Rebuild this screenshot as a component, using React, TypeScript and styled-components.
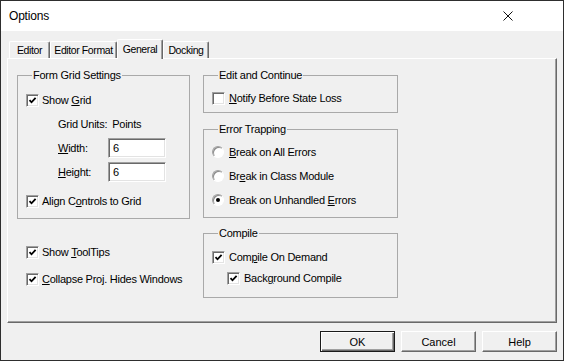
import React from "react";
import styled, { createGlobalStyle, css } from "styled-components";

const Global = createGlobalStyle`
  html, body { margin: 0; padding: 0; background: #ffffff; }
  * { box-sizing: border-box; }
`;

const Window = styled.div`
  width: 564px;
  height: 361px;
  border: 1px solid #2e2e2e;
  background: #f0f0f0;
  display: flex;
  flex-direction: column;
  font-family: "Liberation Sans", Arial, sans-serif;
  font-size: 11px;
  letter-spacing: -0.25px;
  color: #000;
  overflow: hidden;
`;

const TitleBar = styled.div`
  height: 30px;
  flex: none;
  background: #ffffff;
  display: flex;
  align-items: center;
  justify-content: space-between;
  padding: 0 50px 0 8px;
`;

const TitleText = styled.span`
  font-size: 12px;
  letter-spacing: -0.2px;
`;

const Body = styled.div`
  flex: 1;
  display: flex;
  flex-direction: column;
  padding: 8px 6px 0 6px;
`;

const TabStrip = styled.div`
  height: 19px;
  display: flex;
  align-items: flex-end;
  padding-left: 2px;
`;

const Tab = styled.div<{ $active?: boolean; $w: number }>`
  width: ${(p) => p.$w}px;
  height: ${(p) => (p.$active ? 20 : 17)}px;
  margin-bottom: ${(p) => (p.$active ? -1 : 0)}px;
  padding-bottom: ${(p) => (p.$active ? 2 : 0)}px;
  border-top: 1px solid #ffffff;
  border-left: 1px solid #ffffff;
  border-right: 1px solid #696969;
  box-shadow: inset -1px 0 0 #a0a0a0;
  border-radius: 2px 2px 0 0;
  background: #f0f0f0;
  display: flex;
  align-items: center;
  justify-content: center;
  white-space: nowrap;
  font-size: 10.5px;
  letter-spacing: -0.4px;
  position: relative;
  z-index: ${(p) => (p.$active ? 1 : 0)};
`;

const Panel = styled.div`
  height: 265px;
  flex: none;
  border-top: 1px solid #ffffff;
  border-left: 1px solid #ffffff;
  border-right: 1px solid #696969;
  border-bottom: 1px solid #696969;
  box-shadow: inset -1px -1px 0 #a0a0a0;
  padding: 9px 0 0 9px;
  display: flex;
  gap: 13px;
`;

const Column = styled.div<{ $w: number }>`
  width: ${(p) => p.$w}px;
  display: flex;
  flex-direction: column;
`;

const Group = styled.fieldset<{ $pad: string; $mt?: number }>`
  margin: ${(p) => p.$mt ?? 0}px 0 0 0;
  padding: ${(p) => p.$pad};
  border: 1px solid #a9a9a9;
  min-width: 0;
  display: flex;
  flex-direction: column;
`;

const Legend = styled.legend`
  padding: 0 1px;
  margin-left: 6px;
  line-height: 14px;
  font-size: 11px;
`;

const Row = styled.div<{ $h: number; $indent?: number; $mt?: number; $gap?: number }>`
  height: ${(p) => p.$h}px;
  margin-top: ${(p) => p.$mt ?? 0}px;
  padding-left: ${(p) => p.$indent ?? 0}px;
  display: flex;
  align-items: center;
  gap: ${(p) => p.$gap ?? 3}px;
  white-space: nowrap;
`;

const Box = styled.span`
  width: 13px;
  height: 13px;
  flex: none;
  background: #ffffff;
  border: 1px solid;
  border-color: #a0a0a0 #ffffff #ffffff #a0a0a0;
  box-shadow: inset 1px 1px 0 #696969, inset -1px -1px 0 #e3e3e3;
  display: flex;
  align-items: center;
  justify-content: center;
`;

const RadioCircle = styled.span`
  width: 12px;
  height: 12px;
  flex: none;
  border-radius: 50%;
  background: #ffffff;
  border: 1px solid;
  border-color: #a0a0a0 #ffffff #ffffff #a0a0a0;
  box-shadow: inset 1px 1px 0 #8a8a8a;
  display: flex;
  align-items: center;
  justify-content: center;
`;

const Dot = styled.span`
  width: 4px;
  height: 4px;
  border-radius: 50%;
  background: #000;
`;

const FieldLabel = styled.span`
  width: 50px;
`;

const TextBox = styled.input`
  width: 58px;
  height: 20px;
  padding: 0 0 0 4px;
  margin: 0;
  font: inherit;
  font-size: 11px;
  color: #000;
  background: #ffffff;
  border: 1px solid;
  border-color: #a0a0a0 #ffffff #ffffff #a0a0a0;
  box-shadow: inset 1px 1px 0 #696969, inset -1px -1px 0 #e3e3e3;
  outline: none;
`;

const ButtonRow = styled.div`
  margin-top: 8px;
  display: flex;
  justify-content: flex-end;
  gap: 6px;
`;

const Button = styled.button<{ $default?: boolean }>`
  width: 75px;
  height: 21px;
  padding: 0;
  margin: 0;
  background: #f0f0f0;
  font: inherit;
  font-size: 11px;
  color: #000;
  border: 1px solid;
  border-color: #ffffff #696969 #696969 #ffffff;
  box-shadow: inset -1px -1px 0 #a0a0a0;
  ${(p) =>
    p.$default &&
    css`
      border-color: #1a1a1a;
      box-shadow: inset 1px 1px 0 #ffffff, inset -1px -1px 0 #696969, inset -2px -2px 0 #a0a0a0;
    `}
`;

const CheckMark = () => (
  <svg width="9" height="9" viewBox="0 0 9 9">
    <path d="M1.5 4.2 L3.5 6.3 L7.6 1.8" fill="none" stroke="#000" strokeWidth="1.8" />
  </svg>
);

const CloseIcon = () => (
  <svg width="10" height="10" viewBox="0 0 10 10">
    <path d="M0.5 0.5 L9.5 9.5 M9.5 0.5 L0.5 9.5" stroke="#111" strokeWidth="1" />
  </svg>
);

const Check: React.FC<{ on?: boolean }> = ({ on }) => <Box>{on && <CheckMark />}</Box>;
const Radio: React.FC<{ on?: boolean }> = ({ on }) => <RadioCircle>{on && <Dot />}</RadioCircle>;

export default function App() {
  return (
    <>
      <Global />
      <Window>
        <TitleBar>
          <TitleText>Options</TitleText>
          <CloseIcon />
        </TitleBar>
        <Body>
          <TabStrip>
            <Tab $w={41}>Editor</Tab>
            <Tab $w={67}>Editor Format</Tab>
            <Tab $w={46} $active>General</Tab>
            <Tab $w={46}>Docking</Tab>
          </TabStrip>
          <Panel>
            <Column $w={173}>
              <Group $pad="6px 8px 5px 8px">
                <Legend>Form Grid Settings</Legend>
                <Row $h={24}>
                  <Check on />
                  <span>Show <u>G</u>rid</span>
                </Row>
                <Row $h={24} $indent={32} $gap={5}>
                  <span>Grid Units:</span>
                  <span>Points</span>
                </Row>
                <Row $h={24} $indent={32} $gap={0}>
                  <FieldLabel><u>W</u>idth:</FieldLabel>
                  <TextBox readOnly value="6" />
                </Row>
                <Row $h={24} $indent={32} $gap={0}>
                  <FieldLabel><u>H</u>eight:</FieldLabel>
                  <TextBox readOnly value="6" />
                </Row>
                <Row $h={24} $mt={5}>
                  <Check on />
                  <span>Align C<u>o</u>ntrols to Grid</span>
                </Row>
              </Group>
              <Row $h={20} $mt={23} $indent={9}>
                <Check on />
                <span>Show <u>T</u>oolTips</span>
              </Row>
              <Row $h={20} $mt={7} $indent={9}>
                <Check on />
                <span><u>C</u>ollapse Proj. Hides Windows</span>
              </Row>
            </Column>
            <Column $w={195}>
              <Group $pad="6px 8px 4px 8px">
                <Legend>Edit and Continue</Legend>
                <Row $h={20} $gap={4}>
                  <Check />
                  <span><u>N</u>otify Before State Loss</span>
                </Row>
              </Group>
              <Group $pad="4px 8px 5px 8px" $mt={9}>
                <Legend>Error Trapping</Legend>
                <Row $h={24} $gap={5}>
                  <Radio />
                  <span><u>B</u>reak on All Errors</span>
                </Row>
                <Row $h={24} $gap={5}>
                  <Radio />
                  <span>Br<u>e</u>ak in Class Module</span>
                </Row>
                <Row $h={24} $gap={5}>
                  <Radio on />
                  <span>Break on Unhandled <u>E</u>rrors</span>
                </Row>
              </Group>
              <Group $pad="7px 8px 9px 8px" $mt={8}>
                <Legend>Compile</Legend>
                <Row $h={20} $gap={4}>
                  <Check on />
                  <span>Com<u>p</u>ile On Demand</span>
                </Row>
                <Row $h={20} $mt={1} $indent={15} $gap={4}>
                  <Check on />
                  <span>Back<u>g</u>round Compile</span>
                </Row>
              </Group>
            </Column>
          </Panel>
          <ButtonRow>
            <Button $default>OK</Button>
            <Button>Cancel</Button>
            <Button>Help</Button>
          </ButtonRow>
        </Body>
      </Window>
    </>
  );
}
